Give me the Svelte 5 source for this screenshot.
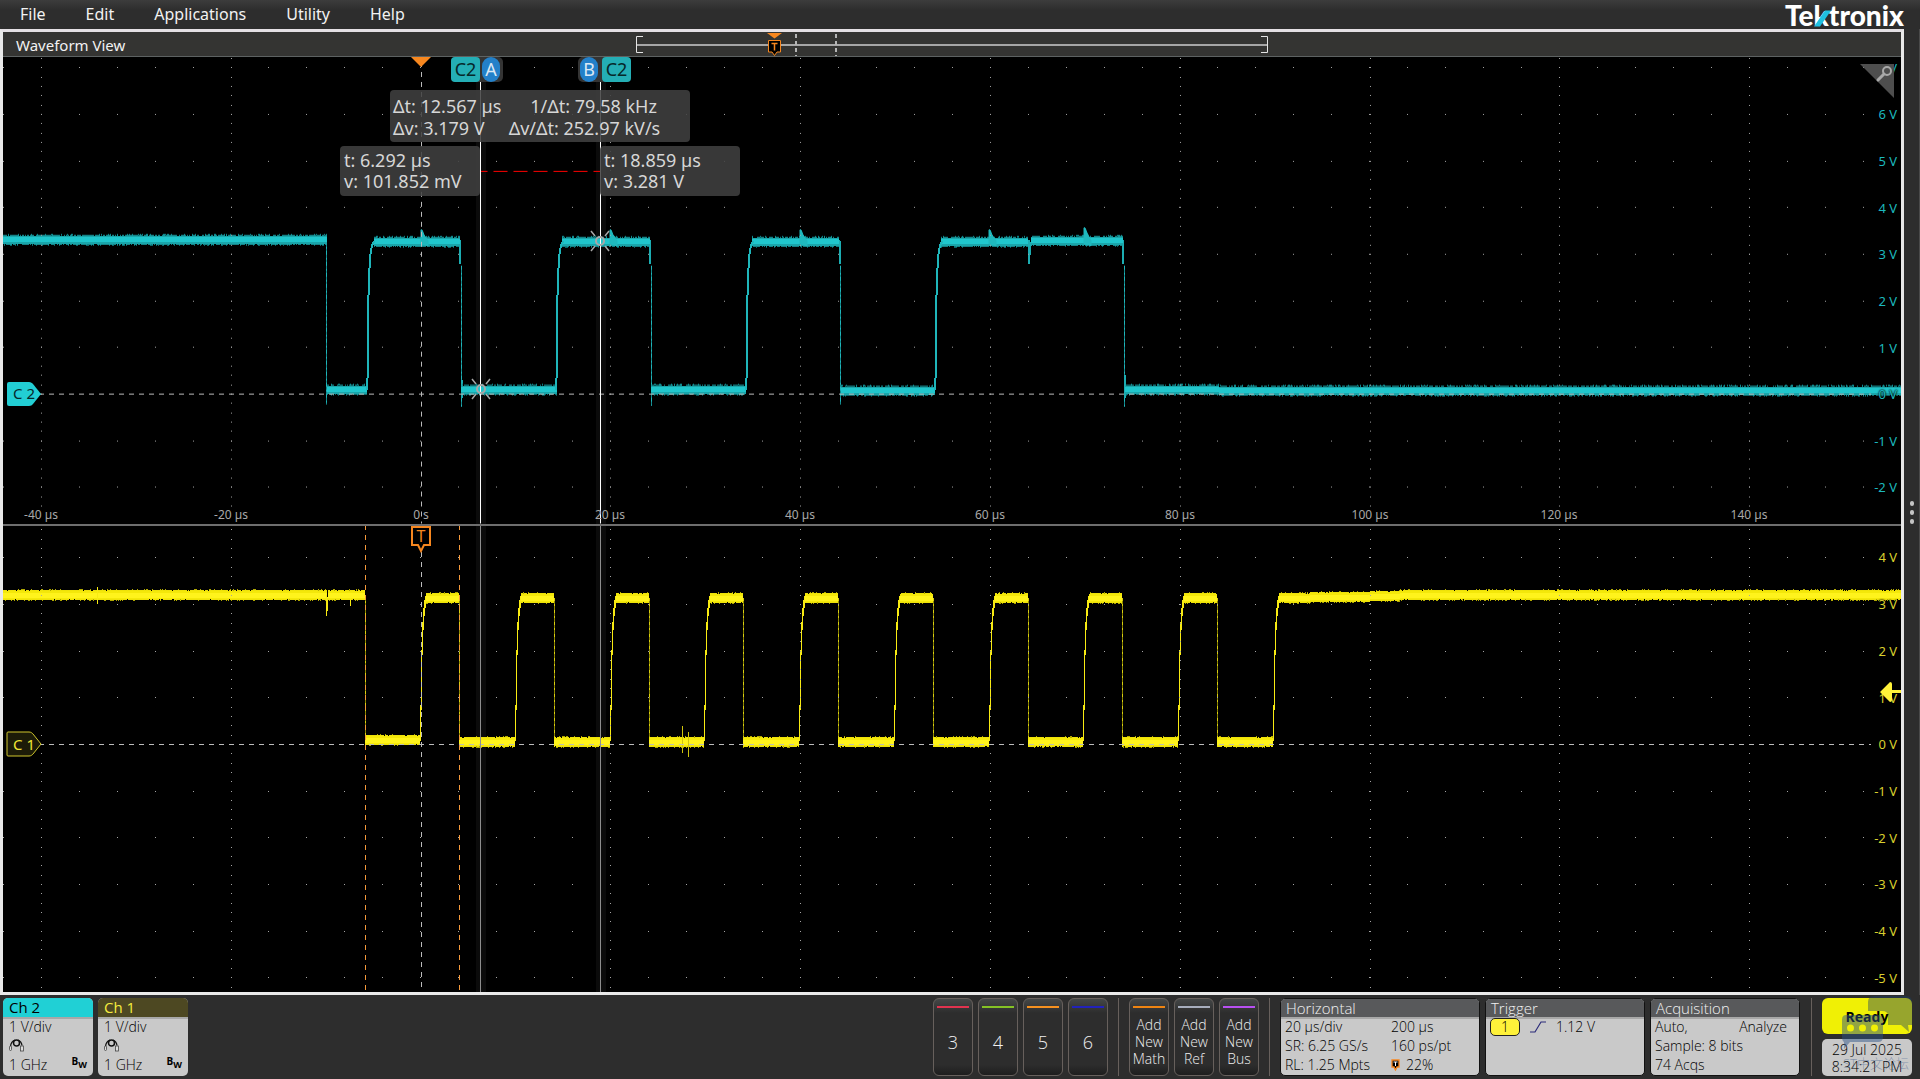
<script>
  const view = {
    top: { x: 3, y: 57, w: 1898, h: 467 },
    bottom: { x: 3, y: 526, w: 1898, h: 466 }
  };

  const menu = ['File', 'Edit', 'Applications', 'Utility', 'Help'];

  const timeTicks = [-40, -20, 0, 20, 40, 60, 80, 100, 120, 140];
  const timeX = (us) => Math.floor(421.2 + us * 9.489);
  const voltY = { c2: (v) => 394.5 - v * 46.67, c1: (v) => 744.5 - v * 46.67 };

  const topVolts = [7, 6, 5, 4, 3, 2, 1, 0, -1, -2];
  const bottomVolts = [4, 3, 2, 1, 0, -1, -2, -3, -4, -5];

  const place = (v, x, y) =>
    `left:${((x - v.x) / v.w) * 100}%;top:${((y - v.y) / v.h) * 100}%`;

  function grid(zero, volts, yMin, yMax) {
    let d = '';
    for (const v of volts) {
      if (v === 0) continue;
      const y = Math.floor(zero - v * 46.67);
      for (let x = 3.3; x < 1870; x += 37.957) d += `M${Math.floor(x)} ${y}.5h1`;
    }
    for (const t of timeTicks) {
      if (t === 0) continue;
      const x = timeX(t);
      for (let k = -60; k < 60; k++) {
        const y = Math.floor(zero - k * 9.334);
        if (y > yMin && y < yMax) d += `M${x} ${y}.5h1`;
      }
    }
    return d;
  }
  const gridTop = grid(394.5, topVolts, 57, 508);
  const gridBottom = grid(744.5, bottomVolts, 528, 990);

  function random(seed) {
    let s = seed;
    return () => {
      s = (s * 1664525 + 1013904223) % 4294967296;
      return s / 4294967296;
    };
  }

  // Each flat stretch is [x0, x1, y]; ticks model the noise on either edge.
  function noise(flats, half, seed, density) {
    const r = random(seed);
    let near = '';
    let far = '';
    for (const [x0, x1, y] of flats) {
      for (let x = x0; x < x1; x++) {
        if (r() < density) near += `M${x}.5 ${y - half - 1}v1`;
        if (r() < density) near += `M${x}.5 ${y + half}v1`;
        if (r() < 0.16) far += `M${x}.5 ${y - half - 2}v2`;
        if (r() < 0.2) far += `M${x}.5 ${y + half}v2`;
      }
    }
    return { near, far };
  }
  const bars = (flats) => flats.map(([a, b, y]) => `M${a} ${y}H${b}`).join('');

  const c2Flats = [
    [3, 327, 240], [327, 367, 390], [374, 460, 242], [461, 557, 390],
    [562, 650, 242], [651, 746, 390], [752, 839, 242], [841, 935, 391],
    [941, 1028, 242], [1031, 1123, 241], [1125, 1219, 390], [1219, 1901, 391]
  ];
  const c2Rises = [367, 556, 746, 935];
  const c2Rise = c2Rises
    .map((x) => `M${x} 390L${x + 1} 368V311L${x + 2} 280L${x + 3} 258L${x + 4} 250L${x + 6} 243L${x + 8} 242`)
    .join('');
  const c2Fall = 'M326.5 240V405M461.5 266V407M651.5 266V406M840.5 266V405M1124.5 266V407';
  const c2Drop = 'M460 240L460.500 264M650 240L650.500 264M839.500 240L840 264M1123 240L1123.500 264M1028.500 240V264M1029.500 255L1031 242M1125 375V398M461.500 380V398';
  const c2Peaks = [[421, 230], [610, 230], [800, 230], [989, 230], [1084, 228]]
    .map(([x, y]) => `M${x} 244V${y}H${x + 1}L${x + 3} ${y + 5}L${x + 7} 241V246Z`)
    .join('');

  const step = 94.75;
  const c1Flats = [[3, 365, 595], [365, 420, 740]];
  let c1Rise = '';
  let c1Fall = 'M365.5 595V740';
  for (let k = 0; k < 10; k++) {
    const x = Math.round(420 + step * k);
    c1Rise += `M${x}.5 741V705M${x + 1}.5 710V650M${x + 2}.5 655V622M${x + 3}.5 630V608M${x + 4}.5 616V600M${x + 5}.5 608V596`;
    if (k < 9) {
      const f = Math.round(459.2 + step * k);
      c1Flats.push([x + 6, f, 598], [f, Math.round(420 + step * (k + 1)), 742]);
      c1Fall += `M${f}.5 598V742`;
    }
  }
  c1Flats.push([1279, 1310, 598], [1310, 1370, 597], [1370, 1400, 596], [1400, 1901, 595]);

  const n2 = noise(c2Flats, 4, 7, 0.7);
  const n1 = noise(c1Flats, 4, 21, 0.9);

  const channels = [
    { name: 'Ch 2', kind: 'cyan' },
    { name: 'Ch 1', kind: 'olive' }
  ];
  const spare = [
    { label: '3', tone: 'red' },
    { label: '4', tone: 'green' },
    { label: '5', tone: 'amber' },
    { label: '6', tone: 'blue' }
  ];
  const adds = [
    { label: 'Math', tone: 'orange' },
    { label: 'Ref', tone: 'silver' },
    { label: 'Bus', tone: 'violet' }
  ];
</script>

<div class="app">
  <header class="menubar">
    <nav>
      {#each menu as m}<button type="button">{m}</button>{/each}
    </nav>
    <svg class="logo" width="118" height="28" viewBox="0 0 118 28" role="img" aria-label="Tektronix">
      <text x="0" y="25" class="brand">Tektronix</text>
      <path d="M29 25.500L40 9.500H46L35 25.500Z" fill="#1fc0e0" />
    </svg>
  </header>

  <div class="middle">
    <main class="window">
      <div class="titlebar">
        <h1>Waveform View</h1>
        <svg class="navigator" width="634" height="24" viewBox="635 32 634 24" aria-hidden="true">
          <path d="M636 45H1268" stroke="#a6a6a6" stroke-width="2" />
          <path d="M643 36.500H636.500V52.500H643M1261 36.500H1267.500V52.500H1261" fill="none" stroke="#e4e4e4" />
          <path d="M796 34V56M836 34V56" stroke="#b4b4b4" stroke-width="2" stroke-dasharray="4 3" />
          <path d="M767 33H782L774.500 38.500Z" fill="#f7871f" />
          <path d="M768.500 40.500H780.500V52H777L774.500 55.500L772 52H768.500Z" fill="#000" stroke="#f7871f" />
          <path d="M771.500 43.500H777.500M774.500 43.500V50.500" stroke="#f7871f" stroke-width="1.500" />
        </svg>
      </div>

      <section class="plot" aria-label="Channel 2 waveform">
        <svg class="graph" viewBox="3 57 1898 467" preserveAspectRatio="none" aria-hidden="true">
          <path d="M476 57h10v467h-10zM596 57h10v467h-10z" fill="#0b0b0b" />
          <g fill="none">
            <path d={c2Fall} stroke="#13898d" />
            <path d={c2Fall} stroke="#1fb5ba" stroke-dasharray="4 3 2 2" />
            <path d={c2Drop} stroke="#1cadb2" stroke-width="2" />
            <path d={n2.far} stroke="#0f7f83" />
            <path d={bars(c2Flats)} stroke="#1aa5aa" stroke-width="8" />
            <path d={n2.near} stroke="#1aa5aa" />
            <path d={bars(c2Flats)} stroke="#20c6cc" stroke-width="5" />
            <path d={c2Rise} stroke="#1fb5ba" stroke-width="2" />
          </g>
          <path d={c2Peaks} fill="#1fb9be" stroke="#1fb9be" />
          <path d={gridTop} stroke="#a4a4a4" />
          <path d="M9 394.500H1871" class="dash" />
          <path d="M421.500 62V524" class="dash" />
          <path d="M480.500 171.500H600" stroke="#f00" stroke-dasharray="14 6" stroke-dashoffset="7" />
          <path d="M480.500 57V524M600.500 57V524" stroke="#fff" />
        </svg>

        {#each topVolts as v}
          <span class="volt cyan-text" style={place(view.top, 1897, voltY.c2(v))}>{v} V</span>
        {/each}
        {#each timeTicks as t}
          <span class="time" style={place(view.top, timeX(t), 515)}>{t === 0 ? '0 s' : `${t} µs`}</span>
        {/each}

        <svg class="pin" width="20" height="10" viewBox="0 0 20 10" style={place(view.top, 411, 57)} aria-hidden="true">
          <path d="M0 0H20L10 10Z" fill="#f7871f" />
        </svg>

        {#each [[481, 389], [600, 241]] as [x, y]}
          <svg class="cross" width="24" height="24" viewBox="-12 -12 24 24" style={place(view.top, x, y)} aria-hidden="true">
            <circle r="4" fill="none" stroke="#a8a8a8" stroke-width="2" />
            <path d="M-5 -5L-9 -10M5 -5L9 -10M-5 5L-9 10M5 5L9 10" stroke="#a8a8a8" stroke-width="1.500" />
          </svg>
        {/each}

        <div class="cursor-tag tag-a" style={place(view.top, 451, 57)}>
          <span class="source">C2</span><span class="letter">A</span>
        </div>
        <div class="cursor-tag tag-b" style={place(view.top, 578, 57)}>
          <span class="letter">B</span><span class="source">C2</span>
        </div>

        <div class="readout delta" style={place(view.top, 390, 90)}>
          <p><span>Δt: 12.567 µs</span><span class="far">1/Δt: 79.58 kHz</span></p>
          <p><span>Δv: 3.179 V</span><span class="near">Δv/Δt: 252.97 kV/s</span></p>
        </div>
        <div class="readout point" style={place(view.top, 340, 146)}>
          <p>t: 6.292 µs</p>
          <p>v: 101.852 mV</p>
        </div>
        <div class="readout point" style={place(view.top, 600, 146)}>
          <p>t: 18.859 µs</p>
          <p>v: 3.281 V</p>
        </div>

        <svg class="flag" width="34" height="24" viewBox="0 0 34 24" style={place(view.top, 7, 394)} role="img" aria-label="C 2">
          <path d="M2 0H22C24 0 25 1 26 2L34 12L26 22C25 23 24 24 22 24H2Q0 24 0 22V2Q0 0 2 0Z" fill="#22ced4" />
          <text x="6" y="17" fill="#06282a">C 2</text>
        </svg>

        <button type="button" class="zoom" aria-label="Zoom">
          <svg width="34" height="34" viewBox="0 0 34 34" aria-hidden="true">
            <path d="M0 0H34V34Z" fill="#4e4e4e" />
            <circle cx="27" cy="7" r="4" fill="none" stroke="#a9a9a9" stroke-width="2" />
            <path d="M24 10L18 16" stroke="#a9a9a9" stroke-width="3" stroke-linecap="round" />
          </svg>
        </button>
      </section>

      <section class="plot second" aria-label="Channel 1 waveform">
        <svg class="graph" viewBox="3 526 1898 466" preserveAspectRatio="none" aria-hidden="true">
          <path d="M476 526h10v466h-10zM596 526h10v466h-10z" fill="#0b0b0b" />
          <g fill="none">
            <path d={c1Fall} stroke="#8d8600" />
            <path d={c1Fall} stroke="#d8cd10" stroke-dasharray="3 3 2 4" />
            <path d={n1.far} stroke="#b0a800" />
            <path d={bars(c1Flats)} stroke="#f4e80a" stroke-width="8" />
            <path d={n1.near} stroke="#eee208" />
            <path d={bars(c1Flats)} stroke="#fff31c" stroke-width="5" />
            <path d={c1Rise} stroke="#f7ea12" />
            <path d="M326.500 595V616M327.500 600V611M97.500 587V604M350.500 598V606" stroke="#f7ea12" />
            <path d="M682.500 726V753M688.500 732V757" stroke="#cfc40c" />
            <path d="M327.500 589V597" stroke="#000" />
          </g>
          <path d={gridBottom} stroke="#a4a4a4" />
          <path d="M9 744.500H1871" class="dash" />
          <path d="M421.500 552V990" class="dash" />
          <path d="M365.500 525V990M459.500 525V990" stroke="#f79a3b" stroke-dasharray="5 5" />
          <path d="M480.500 526V992M600.500 526V992" stroke="#8e8e8e" />
        </svg>

        {#each bottomVolts as v}
          <span class="volt yellow-text" style={place(view.bottom, 1897, voltY.c1(v))}>{v} V</span>
        {/each}

        <svg class="pin" width="20" height="27" viewBox="0 0 20 27" style={place(view.bottom, 411, 526)} aria-hidden="true">
          <path d="M1 1H19V19H13L10 25L7 19H1Z" fill="#000" stroke="#f7871f" stroke-width="2" />
          <text x="10" y="16" class="t-big">T</text>
        </svg>

        <svg class="flag" width="36" height="26" viewBox="0 0 36 26" style={place(view.bottom, 6, 744)} role="img" aria-label="C 1">
          <path d="M2 1H23C25 1 26 2 27 3L35 13L27 23C26 24 25 25 23 25H2Q1 25 1 24V2Q1 1 2 1Z" fill="#1c1b08" stroke="#d0c62c" />
          <text x="7" y="19" fill="#f0e636">C 1</text>
        </svg>

        <svg class="level" width="21" height="20" viewBox="0 0 21 20" style={place(view.bottom, 1880, 692)} aria-hidden="true">
          <path d="M0 10L10 0Q12 0 12 2V8H21V11H12V18Q12 20 10 20Z" fill="#fff23a" />
        </svg>
      </section>
    </main>

    <aside>
      <button type="button" class="grip" aria-label="Open results bar"><i></i><i></i><i></i></button>
    </aside>
  </div>

  <footer>
    {#each channels as c}
      <button type="button" class="card channel {c.kind}">
        <span class="head">{c.name}</span>
        <span class="body">
          <span class="line">1 V/div</span>
          <svg width="16" height="14" viewBox="0 0 16 14" aria-hidden="true">
            <circle cx="7.500" cy="4.500" r="3" fill="none" stroke="#111" stroke-width="1.500" />
            <path d="M1.500 8Q2 3 6 1.500M9 1.500Q12.500 3 13 7" fill="none" stroke="#111" stroke-width="1.300" />
            <rect x="0.500" y="7.500" width="2" height="4.500" rx="1" fill="#ddd" stroke="#444" stroke-width="0.800" />
            <rect x="11.500" y="7.500" width="3" height="5" fill="#ddd" stroke="#444" stroke-width="0.800" />
          </svg>
          <span class="line split"><span>1 GHz</span><b class="bw">B<sub>W</sub></b></span>
        </span>
      </button>
    {/each}

    <div class="spacer"></div>

    {#each spare as s}
      <button type="button" class="slot number"><i class={s.tone}></i><span>{s.label}</span></button>
    {/each}
    <span class="rule"></span>
    {#each adds as a}
      <button type="button" class="slot"><i class={a.tone}></i><span>Add<br />New<br />{a.label}</span></button>
    {/each}
    <span class="rule"></span>

    <button type="button" class="card info horizontal">
      <span class="head">Horizontal</span>
      <span class="body columns">
        <span>20 µs/div</span><span>200 µs</span>
        <span>SR: 6.25 GS/s</span><span>160 ps/pt</span>
        <span>RL: 1.25 Mpts</span>
        <span class="position">
          <svg width="9" height="12" viewBox="0 0 9 12" aria-hidden="true">
            <path d="M1 1H8V8H6L4.500 11L3 8H1Z" fill="#000" stroke="#f7871f" stroke-width="1.300" />
            <path d="M2.500 3H6.500M4.500 3V7" stroke="#fff" />
          </svg>
          22%
        </span>
      </span>
    </button>

    <button type="button" class="card info trigger">
      <span class="head">Trigger</span>
      <span class="body">
        <span class="source-row">
          <span class="pill">1</span>
          <svg width="16" height="12" viewBox="0 0 16 12" aria-hidden="true">
            <path d="M0 11H5L11 1H16" fill="none" stroke="#2b2b7a" stroke-width="1.200" />
          </svg>
          <span>1.12 V</span>
        </span>
      </span>
    </button>

    <button type="button" class="card info acquisition">
      <span class="head">Acquisition</span>
      <span class="body">
        <span class="line split"><span>Auto,</span><span>Analyze</span></span>
        <span class="line">Sample: 8 bits</span>
        <span class="line">74 Acqs</span>
      </span>
    </button>
    <span class="rule"></span>

    <div class="status">
      <button type="button" class="ready">Ready</button>
      <time datetime="2025-07-29T20:34:21"><span>29 Jul 2025</span><span>8:34:21 PM</span></time>
      <div class="stamp" aria-hidden="true">
        <svg width="92" height="60" viewBox="0 0 92 60">
          <path d="M52 1H84Q90 1 90 7V30H86L87 37L79 30H66V21Q66 16 60 16H46V7Q46 1 52 1Z" fill="#1d3f66" fill-opacity="0.420" />
          <path fill-rule="evenodd" d="M24 20H56Q61 20 61 25V42Q61 47 56 47H28L22 54V47Q20 46 20 42V25Q20 20 24 20ZM25 33a3.500 3.500 0 1 0 7 0a3.500 3.500 0 1 0 -7 0ZM37 33a3.500 3.500 0 1 0 7 0a3.500 3.500 0 1 0 -7 0ZM49 33a3.500 3.500 0 1 0 7 0a3.500 3.500 0 1 0 -7 0Z" fill="#2c5388" fill-opacity="0.480" />
        </svg>
        <span>ST中文论坛</span>
      </div>
    </div>
  </footer>
</div>

<style>
  :global(body) {
    background: #2d2d2d;
  }
  .app {
    display: flex;
    flex-direction: column;
    min-height: 100vh;
    font-family: 'Noto Sans', 'Open Sans', sans-serif;
    color: #f2f2f2;
    background: #2d2d2d;
  }
  button {
    font: inherit;
    color: inherit;
    background: none;
    border: 0;
    padding: 0;
    margin: 0;
    cursor: pointer;
  }
  .menubar {
    display: flex;
    justify-content: space-between;
    align-items: center;
    height: 29px;
    padding: 0 17px 0 20px;
    background: linear-gradient(#3c3c3c, #2d2d2d 10px);
  }
  nav {
    display: flex;
    gap: 40px;
    font-size: 16px;
    line-height: 24px;
    padding-bottom: 2px;
  }
  .logo {
    overflow: visible;
  }
  .brand {
    font: 900 28px Lato, sans-serif;
    fill: #fff;
  }
  .middle {
    flex: 1;
    display: flex;
  }
  .window {
    flex: 1;
    display: flex;
    flex-direction: column;
    border: 3px solid #e9e9e9;
    border-top-color: #e4e0e4;
    box-sizing: border-box;
  }
  .titlebar {
    display: grid;
    grid-template-columns: 1fr auto 1fr;
    height: 24px;
    padding: 0 13px;
    background: #343432;
    border-bottom: 1px solid #5d6262;
  }
  h1 {
    margin: 0;
    font-size: 15px;
    font-weight: 400;
    line-height: 26px;
  }
  .t-big {
    font: 16px 'Noto Sans', sans-serif;
    fill: #f7871f;
    text-anchor: middle;
  }
  .plot {
    position: relative;
    flex: 1 1 0;
    background: #000;
    overflow: hidden;
  }
  .second {
    border-top: 2px solid #6e6e6e;
  }
  .graph {
    position: absolute;
    inset: 0;
    width: 100%;
    height: 100%;
    shape-rendering: crispEdges;
  }
  .dash {
    stroke: #bcbcbc;
    stroke-dasharray: 5 5;
  }
  .volt {
    position: absolute;
    transform: translate(-100%, -50%);
    font-size: 13px;
    line-height: 18px;
    white-space: nowrap;
    text-shadow: 0 0 2px #000, 0 0 2px #000;
  }
  .cyan-text {
    color: #1cb8bd;
  }
  .yellow-text {
    color: #d9cf2e;
  }
  .time {
    position: absolute;
    transform: translate(-50%, -50%);
    font-size: 12px;
    line-height: 16px;
    color: #a8a8a8;
    white-space: nowrap;
  }
  .pin {
    position: absolute;
  }
  .cross {
    position: absolute;
    transform: translate(-50%, -50%);
  }
  .flag,
  .level {
    position: absolute;
    transform: translateY(-50%);
  }
  .flag text {
    font: 15px 'Noto Sans', sans-serif;
  }
  .cursor-tag {
    position: absolute;
    display: flex;
    height: 25px;
    font-size: 18px;
    line-height: 25px;
    text-align: center;
    background: #343434;
    border-radius: 5px;
  }
  .tag-a {
    gap: 2px;
    padding-right: 3px;
  }
  .tag-b {
    gap: 4px;
    padding-left: 2px;
  }
  .source {
    width: 29px;
    border-radius: 4px;
    background: #24aeb5;
    color: #06282a;
  }
  .letter {
    width: 18px;
    border-radius: 9px;
    background: #2380c9;
    color: #dbe8f4;
  }
  .readout {
    position: absolute;
    box-sizing: border-box;
    border-radius: 4px;
    background: rgba(64, 64, 64, 0.87);
    color: #d6d6d6;
    font-size: 18px;
    white-space: nowrap;
  }
  .readout p {
    margin: 0;
    display: flex;
  }
  .delta {
    width: 300px;
    padding: 5px 3px 3px;
    line-height: 22px;
  }
  .point {
    width: 140px;
    padding: 4px;
    line-height: 21px;
  }
  .far {
    margin-left: 29px;
  }
  .near {
    margin-left: 24px;
  }
  .zoom {
    position: absolute;
    top: 7px;
    right: 7px;
    line-height: 0;
  }
  aside {
    display: flex;
    align-items: center;
    justify-content: center;
    width: 15px;
    border-right: 1px solid #4a4a4a;
  }
  .grip {
    display: grid;
    gap: 4px;
  }
  .grip i {
    width: 4px;
    height: 5px;
    border-radius: 2px;
    background: #c4c4c4;
  }

  footer {
    display: flex;
    height: 78px;
    padding: 3px 8px 3px 3px;
    font-family: 'Open Sans', 'Noto Sans', sans-serif;
    font-weight: 300;
    font-size: 14px;
  }
  .spacer {
    flex: 1;
  }
  .card {
    display: flex;
    flex-direction: column;
    box-sizing: border-box;
    border-radius: 5px;
    overflow: hidden;
    text-align: left;
    color: #000;
    background: #c9c9c9;
    line-height: 19px;
  }
  .head {
    display: block;
    height: 19px;
    padding: 0 6px;
    font-size: 15px;
    border-bottom: 2px solid #a8a8a8;
  }
  .body {
    display: block;
    padding: 0 6px;
    margin-top: -2px;
  }
  .channel {
    width: 90px;
    margin-right: 5px;
  }
  .channel svg {
    display: block;
    height: 19px;
  }
  .cyan .head {
    background: #20d0d5;
    font-weight: 400;
  }
  .olive .head {
    background: #4d4822;
    color: #f6ec3e;
    font-weight: 400;
  }
  .line {
    display: block;
  }
  .split {
    display: flex;
    justify-content: space-between;
  }
  .bw {
    font-size: 10px;
    font-weight: 700;
    line-height: 12px;
  }
  .bw sub {
    font-size: 9px;
    line-height: 0;
  }
  .slot {
    display: flex;
    flex-direction: column;
    align-items: center;
    box-sizing: border-box;
    width: 40px;
    margin-right: 5px;
    padding-top: 7px;
    border: 1px solid #67605c;
    border-radius: 6px;
    background: linear-gradient(#444747, #2d2d2d 14px, #2d2d2d 66px, #1e1e1e);
    color: #f0f0f0;
    font-size: 14px;
    line-height: 17px;
  }
  .slot i {
    width: 32px;
    height: 2px;
    margin-bottom: 8px;
  }
  .number {
    font-size: 18px;
    line-height: 52px;
  }
  .red { background: #e0334f; }
  .green { background: #84c225; }
  .amber { background: #f59120; }
  .blue { background: #2222bb; }
  .orange { background: #ee8412; }
  .silver { background: #a7aebd; }
  .violet { background: #b750f0; }
  .rule {
    width: 1px;
    margin: 0 10px 0 5px;
    background: #67605c;
  }
  .info {
    border: 1px solid #111;
    margin-right: 5px;
  }
  .info .head {
    background: #58595b;
    color: #f2f2f2;
    height: 18px;
    padding: 0 5px;
  }
  .info .body {
    padding: 0 4px;
  }
  .horizontal {
    width: 200px;
  }
  .horizontal .columns {
    display: grid;
    grid-template-columns: 106px 1fr;
  }
  .position {
    display: flex;
    align-items: center;
    gap: 6px;
  }
  .trigger {
    width: 160px;
  }
  .source-row {
    display: flex;
    align-items: center;
    gap: 10px;
  }
  .pill {
    box-sizing: border-box;
    width: 30px;
    height: 18px;
    line-height: 16px;
    text-align: center;
    border: 1px solid #222;
    border-radius: 5px;
    background: #fff23a;
  }
  .acquisition {
    width: 150px;
    margin-right: 6px;
  }
  .acquisition .split {
    padding-right: 8px;
  }
  .status {
    position: relative;
    display: flex;
    flex-direction: column;
    gap: 5px;
    width: 90px;
  }
  .ready {
    height: 36px;
    border-radius: 6px;
    background: #f0f005;
    color: #000;
    font-size: 14px;
    font-weight: 700;
  }
  time {
    display: flex;
    flex-direction: column;
    justify-content: center;
    height: 37px;
    border-radius: 5px;
    background: #c9c9c9;
    color: #000;
    line-height: 17px;
    text-align: center;
  }
  .stamp {
    position: absolute;
    top: -3px;
    left: 0;
    pointer-events: none;
  }
  .stamp svg {
    display: block;
  }
  .stamp span {
    display: block;
    margin-left: 21px;
    font-family: 'Noto Sans', 'Noto Sans CJK SC', sans-serif;
    font-size: 13px;
    line-height: 17px;
    white-space: nowrap;
    color: rgba(50, 85, 140, 0.45);
  }
</style>
